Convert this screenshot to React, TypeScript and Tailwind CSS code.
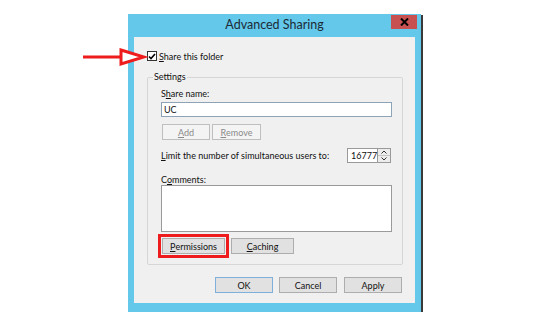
import React from 'react';

const font = { fontFamily: 'Lato, "Noto Sans", Arial, sans-serif' };

const U: React.FC<{ children: React.ReactNode }> = ({ children }) => (
  <span className="underline underline-offset-[1px]">{children}</span>
);

const Btn: React.FC<{ children: React.ReactNode; className?: string; disabled?: boolean }> = ({
  children,
  className = '',
  disabled,
}) => (
  <div
    className={`flex items-center justify-center border text-[9px] leading-none ${
      disabled ? 'border-[#bfbfbf] bg-[#f4f4f4] text-[#8a8a8a]' : 'border-[#adadad] bg-[#e1e1e1] text-[#111]'
    } ${className}`}
  >
    {children}
  </div>
);

const App: React.FC = () => {
  return (
    <div className="relative w-[551px] h-[326px] bg-white pt-[14px] pl-[128px] overflow-hidden" style={font}>
      {/* dialog window */}
      <div className="flex">
        <div className="w-[293px] bg-[#63c8ea] px-[6px] pb-[8px]">
          <div className="relative h-[23px] flex items-center justify-center text-[12.5px] text-[#1c2a36]">
            Advanced Sharing
            <div className="absolute top-[1px] right-[-2px] w-[26px] h-[14px] bg-[#c75050] flex items-center justify-center">
              <svg width="9" height="8" viewBox="0 0 9 8">
                <path d="M1 0.5 L8 7.5 M8 0.5 L1 7.5" stroke="#000" strokeWidth="2" />
              </svg>
            </div>
          </div>

          <div className="h-[266px] bg-[#f0f0f0] pt-[14px] pl-[13px] text-[9px] text-[#111]">
            <div className="flex items-center gap-[2px] h-[10px]">
              <div className="w-[10px] h-[10px] border border-[#333] bg-white flex items-center justify-center">
                <svg width="8" height="7" viewBox="0 0 8 7">
                  <path d="M1 3.5 L3 5.5 L7 1" stroke="#000" strokeWidth="1.6" fill="none" />
                </svg>
              </div>
              <span className="leading-none">
                <U>S</U>hare this folder
              </span>
            </div>

            {/* Settings group */}
            <div className="relative mt-[16px] w-[256px] border border-[#d6d6d6] rounded-[2px] pt-[10px] pl-[13px] pr-[11px] pb-[6px]">
              <span className="absolute -top-[7px] left-[5px] px-[1px] bg-[#f0f0f0] leading-[12px]">Settings</span>

              <div className="leading-[12px]">
                S<U>h</U>are name:
              </div>
              <div className="mt-[2px] h-[15px] w-[231px] border border-[#8ea3b6] bg-white flex items-center pl-[2px] leading-none">
                UC
              </div>

              <div className="mt-[7px] flex gap-[2px] ml-[1px]">
                <Btn disabled className="w-[48px] h-[16px]">
                  <U>A</U>dd
                </Btn>
                <Btn disabled className="w-[49px] h-[16px]">
                  <U>R</U>emove
                </Btn>
              </div>

              <div className="mt-[8px] h-[15px] w-[231px] flex items-center justify-between">
                <span className="leading-none">
                  <U>L</U>imit the number of simultaneous users to:
                </span>
                <div className="flex h-[15px] mr-[1px]">
                  <div className="w-[31px] h-[15px] border border-[#9a9a9a] bg-white flex items-center pl-[3px] leading-none">
                    16777
                  </div>
                  <div className="w-[13px] h-[15px] border border-l-0 border-[#9a9a9a] bg-[#ececec] flex flex-col">
                    <div className="flex-1 flex items-center justify-center border-b border-[#c4c4c4]">
                      <svg width="6" height="4" viewBox="0 0 6 4">
                        <path d="M0.5 3.5 L3 1 L5.5 3.5" stroke="#333" strokeWidth="1" fill="none" />
                      </svg>
                    </div>
                    <div className="flex-1 flex items-center justify-center">
                      <svg width="6" height="4" viewBox="0 0 6 4">
                        <path d="M0.5 0.5 L3 3 L5.5 0.5" stroke="#333" strokeWidth="1" fill="none" />
                      </svg>
                    </div>
                  </div>
                </div>
              </div>

              <div className="mt-[11px] leading-[11px]">
                C<U>o</U>mments:
              </div>
              <div className="h-[47px] w-[231px] border border-[#9a9a9a] bg-white" />

              <div className="mt-[2px] flex items-center gap-[2px]">
                <div className="-ml-[3px] border-[3px] border-[#ee1c1c] p-[1px]">
                  <Btn className="w-[63px] h-[16px]">
                    <U>P</U>ermissions
                  </Btn>
                </div>
                <Btn className="w-[63px] h-[16px]">
                  <U>C</U>aching
                </Btn>
              </div>
            </div>

            {/* dialog buttons */}
            <div className="mt-[12px] flex pl-[68px]">
              <Btn className="w-[58px] h-[16px] !border-[#7fb0dc]">OK</Btn>
              <Btn className="ml-[6px] w-[58px] h-[16px]">Cancel</Btn>
              <Btn className="ml-[7px] w-[58px] h-[16px]">Apply</Btn>
            </div>
          </div>
        </div>
        <div className="w-[2px] mt-[1px] h-[297px] bg-[#3a3a3a]" />
      </div>

      {/* annotation arrow */}
      <svg className="absolute left-[80px] top-[47px]" width="68" height="20" viewBox="0 0 68 20">
        <path d="M3 10 L41 10" stroke="#ee1c1c" strokeWidth="3" />
        <path d="M41 3 L64 10 L41 17 Z" stroke="#ee1c1c" strokeWidth="3" fill="#fff" strokeLinejoin="miter" />
      </svg>
    </div>
  );
};

export default App;
